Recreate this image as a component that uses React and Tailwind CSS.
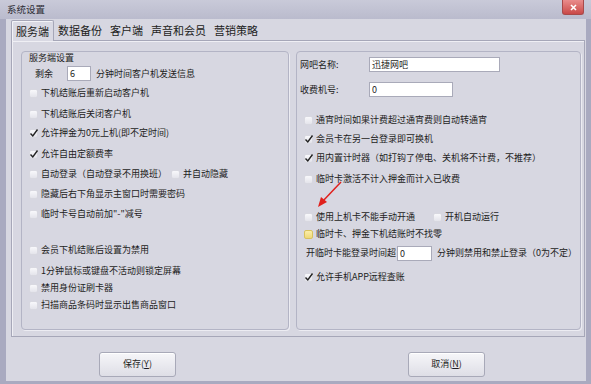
import React from "react";

const font = { fontFamily: '"Noto Sans CJK SC", "Noto Sans", sans-serif' };

function Box({ checked, yellow }) {
  const base = yellow
    ? "border-[#d8c25e] bg-gradient-to-b from-[#fbeea8] to-[#efd878]"
    : "border-[#d8d8e0] bg-gradient-to-b from-[#f8f8fb] to-[#e4e4eb]";
  return (
    <span className={`relative w-[9px] h-[9px] shrink-0 rounded-[2px] border ${base}`}>
      {checked && (
        <svg className="absolute left-[-1px] top-[-2px]" width="10" height="10" viewBox="0 0 10 10">
          <path d="M1.5 5.5 L3.8 8 L8.5 1.5" stroke="#222" strokeWidth="1.4" fill="none" />
        </svg>
      )}
    </span>
  );
}

function Check({ label, checked, yellow, className = "" }) {
  return (
    <div className={`flex items-center h-[16px] gap-[3px] ${className}`}>
      <Box checked={checked} yellow={yellow} />
      <span className="whitespace-nowrap">{label}</span>
    </div>
  );
}

function Field({ value, className }) {
  return (
    <div className={`h-[15px] bg-white border border-[#a9aab9] pl-[2px] text-[9px] leading-[13px] ${className}`}>
      {value}
    </div>
  );
}

export default function App() {
  const tabs = ["数据备份", "客户端", "声音和会员", "营销策略"];
  return (
    <div className="w-[591px] h-[384px] bg-[#a9aac0] flex flex-col text-[#1d1d22] overflow-hidden" style={font}>
      {/* title bar */}
      <div className="h-[19px] shrink-0 flex items-start bg-gradient-to-b from-[#c9cad9] to-[#babbcd]">
        <span className="pl-[7px] pt-[3px] text-[9.5px] leading-[12px] text-[#2c2c34]">系统设置</span>
        <div className="flex-1" />
        <div className="mr-[7px] w-[22px] h-[15px] rounded-b-[3px] bg-gradient-to-b from-[#e98c8c] to-[#c94848] border border-[#a84a4a] border-t-0 flex items-center justify-center">
          <svg width="7" height="7" viewBox="0 0 7 7">
            <path d="M1 1 L6 6 M6 1 L1 6" stroke="#fff" strokeWidth="1.6" />
          </svg>
        </div>
      </div>

      {/* body */}
      <div className="flex-1 ml-[6px] mr-[5px] mb-[3px] bg-[#d7d7e1] flex flex-col">
        {/* tabs */}
        <div className="h-[21px] shrink-0 flex items-end pl-[5px] text-[11px] relative z-10">
          <div className="h-[21px] px-[4px] flex items-center bg-[#d9d9e3] border border-b-0 border-[#a6a7b8] rounded-t-[2px] shadow-[inset_1px_1px_0_#f3f3f7] -mb-px">
            服务端
          </div>
          {tabs.map((t) => (
            <div key={t} className="h-[20px] px-[4px] flex items-center">
              {t}
            </div>
          ))}
        </div>

        {/* panel */}
        <div className="h-[297px] shrink-0 ml-[5px] mr-[1px] border border-[#a6a7b8] shadow-[inset_1px_1px_0_#efeff4] flex gap-[7px] pt-[10px] pl-[9px] pr-[3px] text-[9px] leading-[12px]">
          {/* left group */}
          <div className="w-[268px] h-[279px] rounded-[4px] border border-[#b3b4c5] shadow-[1px_1px_0_#ececf2] flex flex-col pl-[7px]">
            <div className="h-[11px] flex items-center">服务端设置</div>
            <div className="mt-[3px] h-[15px] flex items-center">
              <span className="pl-[6px] w-[38px]">剩余</span>
              <Field value="6" className="w-[24px]" />
              <span className="pl-[5px]">分钟时间客户机发送信息</span>
            </div>
            <Check className="mt-[4px]" label="下机结账后重新启动客户机" />
            <Check className="mt-[5px]" label="下机结账后关闭客户机" />
            <Check className="mt-[3px]" label="允许押金为0元上机(即不定时间)" checked />
            <Check className="mt-[5px]" label="允许自由定额费率" checked />
            <div className="mt-[4px] flex items-center gap-[4px]">
              <Check label="自动登录（自动登录不用换班）" />
              <Check label="并自动隐藏" />
            </div>
            <Check className="mt-[4px]" label="隐藏后右下角显示主窗口时需要密码" />
            <Check className="mt-[4px]" label={'临时卡号自动前加"-"减号'} />
            <Check className="mt-[20px]" label="会员下机结账后设置为禁用" />
            <Check className="mt-[5px]" label="1分钟鼠标或键盘不活动则锁定屏幕" />
            <Check className="mt-[1px]" label="禁用身份证刷卡器" />
            <Check className="mt-[1px]" label="扫描商品条码时显示出售商品窗口" />
          </div>

          {/* right group */}
          <div className="relative w-[285px] h-[279px] rounded-[4px] border border-[#b3b4c5] shadow-[1px_1px_0_#ececf2] flex flex-col pl-[7px]">
            <div className="mt-[5px] h-[15px] flex items-center">
              <span className="-ml-[4px] w-[69px]">网吧名称:</span>
              <Field value="迅捷网吧" className="w-[131px]" />
            </div>
            <div className="mt-[10px] h-[15px] flex items-center">
              <span className="-ml-[4px] w-[69px]">收费机号:</span>
              <Field value="0" className="w-[84px]" />
            </div>
            <Check className="mt-[15px]" label="通宵时间如果计费超过通宵费则自动转通宵" />
            <Check className="mt-[3px]" label="会员卡在另一台登录即可换机" checked />
            <Check className="mt-[3px]" label="用内置计时器（如打钩了停电、关机将不计费，不推荐）" checked />
            <Check className="mt-[5px]" label="临时卡激活不计入押金而计入已收费" />
            <div className="mt-[22px] flex items-center">
              <Check className="w-[129px]" label="使用上机卡不能手动开通" />
              <Check label="开机自动运行" />
            </div>
            <Check className="mt-[1px]" label="临时卡、押金下机结账时不找零" yellow />
            <div className="mt-[3px] h-[16px] flex items-center">
              <span className="ml-[2px] pr-[1px]">开临时卡能登录时间超</span>
              <Field value="0" className="w-[35px]" />
              <span className="pl-[5px] whitespace-nowrap">分钟则禁用和禁止登录（0为不定）</span>
            </div>
            <Check className="mt-[8px]" label="允许手机APP远程查账" checked />

            <svg className="absolute left-[18px] top-[128px]" width="30" height="30" viewBox="0 0 30 30">
              <path d="M26 2 L7 22" stroke="#e0201c" strokeWidth="1.5" />
              <path d="M3 27 L6 17 L12 22 Z" fill="#e0201c" />
            </svg>
          </div>
        </div>

        {/* buttons */}
        <div className="flex-1 flex items-center pl-[93px] pt-[10px] text-[9px]">
          <button className="w-[77px] h-[25px] rounded-[3px] border border-[#a8a9b8] bg-gradient-to-b from-[#f6f6f9] to-[#dedee6] shadow-[inset_0_1px_0_#ffffff]">
            保存(<span className="underline">Y</span>)
          </button>
          <button className="ml-[232px] w-[77px] h-[25px] rounded-[3px] border border-[#a8a9b8] bg-gradient-to-b from-[#f6f6f9] to-[#dedee6] shadow-[inset_0_1px_0_#ffffff]">
            取消(<span className="underline">N</span>)
          </button>
        </div>
      </div>
    </div>
  );
}
